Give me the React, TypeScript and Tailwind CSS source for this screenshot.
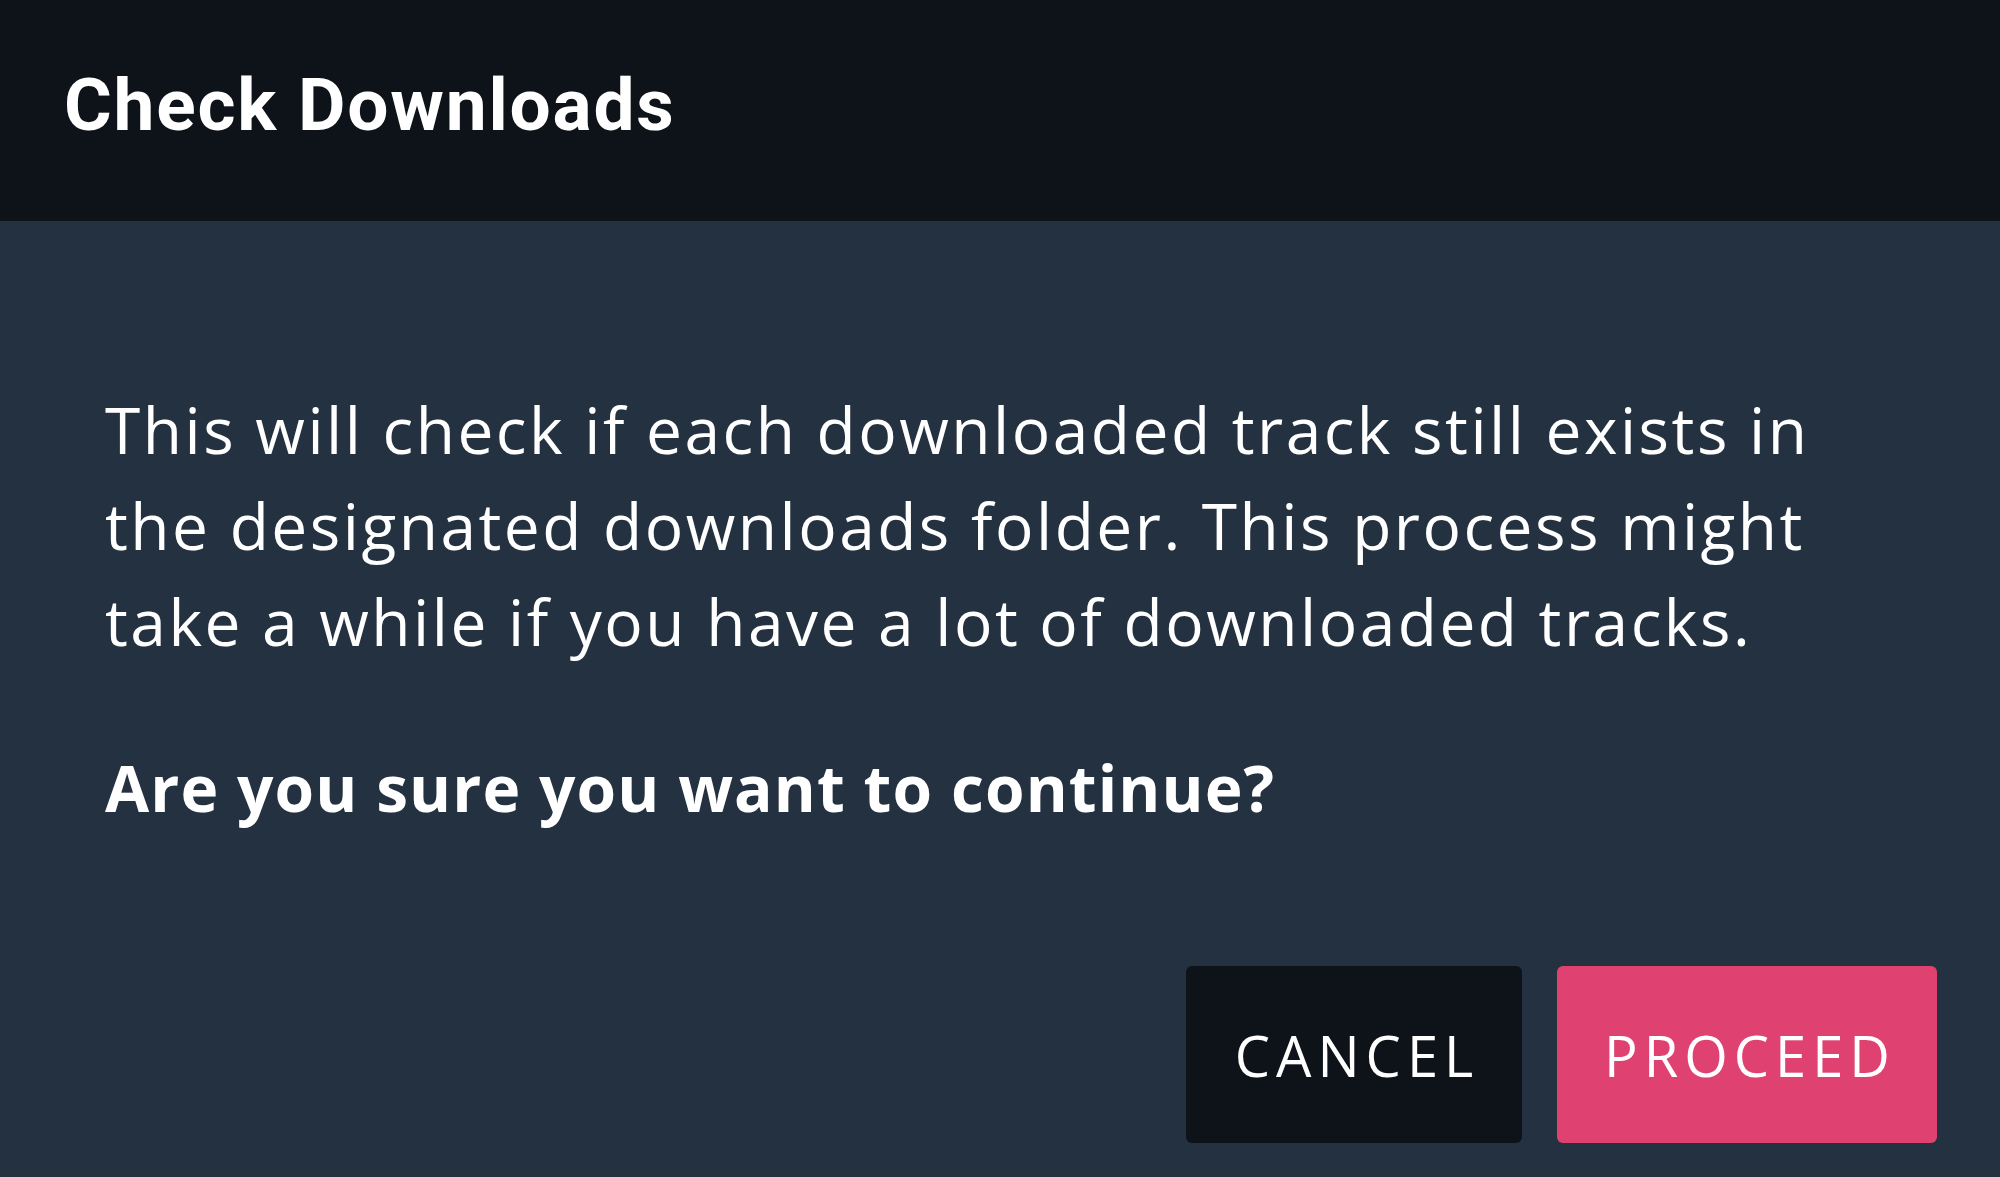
import React from "react";

export default function App() {
  return (
    <div className="w-[2000px] h-[1177px] bg-[#243140] flex flex-col overflow-hidden">
      <div className="h-[221px] bg-[#0e131a] flex items-start pl-[64px] pt-[63px] shrink-0">
        <h1
          className="text-[73px] leading-[84px] font-bold text-white tracking-[1.8px]"
          style={{ fontFamily: "Roboto, 'Liberation Sans', sans-serif" }}
        >
          Check Downloads
        </h1>
      </div>
      <div
        className="flex flex-col px-[105px] pt-[161px] text-white"
        style={{ fontFamily: "'Open Sans', Lato, sans-serif" }}
      >
        <p className="text-[64px] leading-[96px] w-[1800px] tracking-[2.5px]">
          This will check if each downloaded track still exists in the designated downloads folder. This process might take a while if you have a lot of downloaded tracks.
        </p>
        <p className="text-[64px] leading-[96px] font-bold mt-[70px] tracking-[1.1px]">
          Are you sure you want to continue?
        </p>
      </div>
      <div className="flex justify-end gap-[35px] pr-[63px] mt-[130px]">
        <button
          className="h-[177px] w-[336px] pl-[6px] bg-[#0e131a] rounded-[6px] text-white text-[56px] tracking-[6px] text-center"
          style={{ fontFamily: "'Open Sans', Lato, sans-serif" }}
        >
          CANCEL
        </button>
        <button
          className="h-[177px] w-[380px] pl-[6px] bg-[#df4271] rounded-[6px] text-white text-[56px] tracking-[6px] text-center"
          style={{ fontFamily: "'Open Sans', Lato, sans-serif" }}
        >
          PROCEED
        </button>
      </div>
    </div>
  );
}
